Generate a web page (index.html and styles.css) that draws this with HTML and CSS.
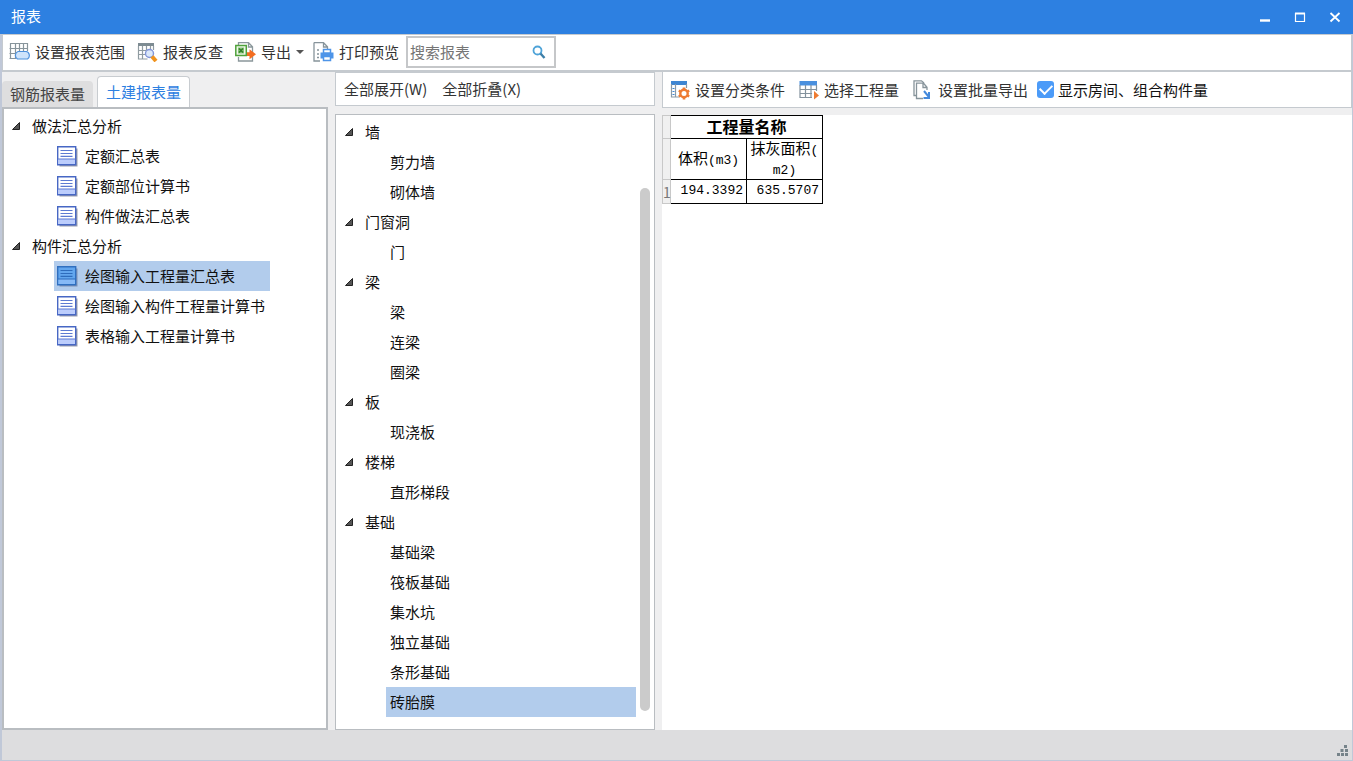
FILE: index.html
```html
<!DOCTYPE html>
<html lang="zh-CN">
<head>
<meta charset="utf-8">
<title>报表</title>
<link rel="stylesheet" href="styles.css">
</head>
<body>
<svg class="sprite" aria-hidden="true">
  <symbol id="doc" viewBox="0 0 21 21">
    <path d="M2.500 2.500h18v18h-18z" fill="#9a9eac"/>
    <path d="M.7 .7h18v18H.7z" fill="#fff" stroke="#4767c4" stroke-width="1.400"/>
    <path d="M1.400 13h16.600v5H1.400z" fill="#bccdfc"/>
    <path d="M1 13h17.500M3.500 4.500h12M3.500 7.500h12M3.500 10.300h12" stroke="#5c7ad2" stroke-width="1.200" fill="none"/>
  </symbol>
  <symbol id="doc-active" viewBox="0 0 21 21">
    <path d="M2.500 2.500h18v18h-18z" fill="#8093b5"/>
    <path d="M.7 .7h18v18H.7z" fill="#62a6ee" stroke="#2f6fc0" stroke-width="1.400"/>
    <path d="M1.400 13h16.600v5H1.400z" fill="#86b9f6"/>
    <path d="M1 13h17.500M3.500 4.500h12M3.500 7.500h12M3.500 10.300h12" stroke="#2d6cbc" stroke-width="1.200" fill="none"/>
  </symbol>
  <symbol id="arrow" viewBox="0 0 8 8"><path d="M7.500 .5v7h-7z" fill="#555" stroke="#222"/></symbol>
</svg>
<div class="window">
  <header class="titlebar">
    <h1 class="title">报表</h1>
    <div class="window-controls">
      <button class="control" aria-label="最小化"><svg width="12" height="12" viewBox="0 0 12 12"><path d="M1 9.500h10" stroke="#fff" stroke-width="2.400"/></svg></button>
      <button class="control" aria-label="最大化"><svg width="12" height="12" viewBox="0 0 12 12"><path d="M1.500 2v8.500h9V2" fill="none" stroke="#fff" stroke-width="1.200"/><path d="M1 2.500h10" stroke="#fff" stroke-width="2"/></svg></button>
      <button class="control" aria-label="关闭"><svg width="12" height="12" viewBox="0 0 12 12"><path d="M1.500 2l9 8.500M10.500 2l-9 8.500" stroke="#fff" stroke-width="1.800"/></svg></button>
    </div>
  </header>
  <div class="frame">
    <div class="toolbar main-toolbar">
      <button class="tool"><svg width="21" height="20" viewBox="0 0 21 20"><path d="M1 1.500h18M.5 6.500h18M.5 11.500h8M.5 16.500h6M1.500 1v16M6.500 1v16M10.500 1v8M14.500 1v8M18.500 1v8" stroke="#87949b" stroke-width="1.200" fill="none"/><path d="M9 9.500h8a3.500 4 0 0 1 1.500 7.500h-10A3.500 4 0 0 1 9 9.500z" fill="#cfe4fb" stroke="#4e91dc" stroke-width="1.200"/></svg>设置报表范围</button>
      <button class="tool"><svg width="21" height="20" viewBox="0 0 21 20"><path d="M1 1h16v3H1z" fill="#7d8b92"/><path d="M1.500 4v13h9M5.500 4v13M9.500 4v4M13.500 4v3M16.500 4v4M1 8.500h8M1 12.500h8" stroke="#8f9ba1" stroke-width="1.200" fill="none"/><circle cx="12.500" cy="11.500" r="4" fill="#dbe8fa" stroke="#8195d8" stroke-width="1.400"/><path d="M15 14.500l4 4.500" stroke="#f0931e" stroke-width="4"/></svg>报表反查</button>
      <button class="tool"><svg width="21" height="20" viewBox="0 0 21 20"><path d="M3.500 3V.7h10l4 4V19h-14v-4M13.500 1v4h4" fill="none" stroke="#8b979b" stroke-width="1.300"/><path d="M.8 3.500h10.500v10H.8z" fill="#eef6e9" stroke="#50a23c" stroke-width="1.500"/><path d="M3 5.500h6v6H3z" fill="#8bc57a"/><path d="M4 6.500l4 4M8 6.500l-4 4" stroke="#2f7e27" stroke-width="1.500"/><path d="M12 10.300H14.500V7.200l6.500 5-6.500 5v-3.200H12z" fill="#f36d21"/></svg>导出<i class="caret"></i></button>
      <button class="tool"><svg width="21" height="20" viewBox="0 0 21 20"><path d="M1 .7h9.500l4 4V7M10.500 1v4h4M1 .5V19h6" fill="none" stroke="#87949b" stroke-width="1.300"/><path d="M4 8h2M4 12h2M4 15.500h2" stroke="#87949b" stroke-width="1.500"/><path d="M7.500 10.500H20.500v6H7.500z" fill="#4d94e8"/><path d="M10.500 7.500h7V11h-7zM10.500 14.500h7v4h-7z" fill="#fff" stroke="#4d94e8" stroke-width="1.500"/></svg>打印预览</button>
      <div class="search">
        <input class="search-input" type="text" placeholder="搜索报表" aria-label="搜索报表">
        <svg width="14" height="14" viewBox="0 0 14 14"><circle cx="5.500" cy="5.500" r="4" fill="none" stroke="#4ea3d8" stroke-width="1.800"/><path d="M8.500 8.500l4 4.500" stroke="#3d7fa8" stroke-width="2.400"/></svg>
      </div>
    </div>
    <main class="panes">
      <section class="pane">
        <nav class="tabs">
          <button class="tab">钢筋报表量</button>
          <button class="tab tab-active">土建报表量</button>
        </nav>
        <div class="box report-tree">
          <ul class="tree">
            <li class="group"><svg class="arrow"><use href="#arrow"/></svg>做法汇总分析</li>
            <li class="report"><svg class="doc"><use href="#doc"/></svg>定额汇总表</li>
            <li class="report"><svg class="doc"><use href="#doc"/></svg>定额部位计算书</li>
            <li class="report"><svg class="doc"><use href="#doc"/></svg>构件做法汇总表</li>
            <li class="group"><svg class="arrow"><use href="#arrow"/></svg>构件汇总分析</li>
            <li class="report selected"><svg class="doc"><use href="#doc-active"/></svg>绘图输入工程量汇总表</li>
            <li class="report"><svg class="doc"><use href="#doc"/></svg>绘图输入构件工程量计算书</li>
            <li class="report"><svg class="doc"><use href="#doc"/></svg>表格输入工程量计算书</li>
          </ul>
        </div>
      </section>
      <section class="pane">
        <div class="toolbar fold-toolbar">
          <button class="tool">全部展开(W)</button>
          <button class="tool">全部折叠(X)</button>
        </div>
        <div class="box part-tree">
          <ul class="tree">
            <li class="group"><svg class="arrow"><use href="#arrow"/></svg>墙</li>
            <li class="part">剪力墙</li>
            <li class="part">砌体墙</li>
            <li class="group"><svg class="arrow"><use href="#arrow"/></svg>门窗洞</li>
            <li class="part">门</li>
            <li class="group"><svg class="arrow"><use href="#arrow"/></svg>梁</li>
            <li class="part">梁</li>
            <li class="part">连梁</li>
            <li class="part">圈梁</li>
            <li class="group"><svg class="arrow"><use href="#arrow"/></svg>板</li>
            <li class="part">现浇板</li>
            <li class="group"><svg class="arrow"><use href="#arrow"/></svg>楼梯</li>
            <li class="part">直形梯段</li>
            <li class="group"><svg class="arrow"><use href="#arrow"/></svg>基础</li>
            <li class="part">基础梁</li>
            <li class="part">筏板基础</li>
            <li class="part">集水坑</li>
            <li class="part">独立基础</li>
            <li class="part">条形基础</li>
            <li class="part selected">砖胎膜</li>
          </ul>
          <div class="scrollbar"><div class="thumb"></div></div>
        </div>
      </section>
      <section class="pane">
        <div class="toolbar report-toolbar">
          <button class="tool"><svg width="20" height="20" viewBox="0 0 20 20"><path d="M1 1h16v4H1z" fill="#3f86d2"/><path d="M1.500 4v13h8M5.500 4v13M16.500 4v4" stroke="#8a99a5" stroke-width="1.200" fill="none"/><path d="M2.500 8.500h2M2.500 11.500h2M2.500 14.500h2" stroke="#3f86d2" stroke-width="1.200"/><circle cx="14" cy="13.500" r="3.700" fill="#fff" stroke="#ee7b32" stroke-width="2.400"/><path d="M14 7.500v2M14 17.500v2M8.800 10.500l1.700 1M17.500 15.500l1.700 1M8.800 16.500l1.700-1M17.500 11.500l1.700-1" stroke="#ee7b32" stroke-width="2.600"/></svg>设置分类条件</button>
          <button class="tool"><svg width="20" height="20" viewBox="0 0 20 20"><path d="M.5 1h17.500v4.500H.5z" fill="#4a90de"/><path d="M1 5v12.500h12M6.500 5v12.500M12 5v12.500M17.500 5v6M1 9.500h16M1 13.500h12" stroke="#83929d" stroke-width="1.200" fill="none"/><path d="M15 11l5 4.500-5 4z" fill="#ee7b32"/></svg>选择工程量</button>
          <button class="tool"><svg width="20" height="20" viewBox="0 0 20 20"><path d="M3 15.500H1V.8h7.500L11 3" fill="none" stroke="#87949b" stroke-width="1.300"/><path d="M10 18.500H3.500V3.200h7l3.500 4V10M10 3.500v4h4" fill="none" stroke="#87949b" stroke-width="1.300"/><path d="M11 11l4.500 5.500M16 12v6h-5.500" fill="none" stroke="#4489dc" stroke-width="2"/></svg>设置批量导出</button>
          <label class="check"><input class="check-input" type="checkbox" checked>显示房间、组合构件量</label>
        </div>
        <div class="sheet">
          <table class="grid">
            <colgroup><col class="col-head"><col class="col-value"><col class="col-value"></colgroup>
            <tr><td class="row-head"></td><th class="grid-title" colspan="2">工程量名称</th></tr>
            <tr class="units"><td class="row-head"></td><td>体积<span class="mono">(m3)</span></td><td>抹灰面积<span class="mono">(<br>m2)</span></td></tr>
            <tr class="values"><td class="row-head">1</td><td>194.3392</td><td>635.5707</td></tr>
          </table>
        </div>
      </section>
    </main>
    <footer class="status">
      <svg width="13" height="12" viewBox="0 0 13 12"><path d="M8 0h3v3H8zM4.500 4h3v3h-3zM9 4h3v3H9zM1 8h3v3H1zM5 8h3v3H5zM9 8h3v3H9z" fill="#76838a"/></svg>
    </footer>
  </div>
</div>
</body>
</html>
```
FILE: styles.css
```css
* { box-sizing: border-box; }
body {
  margin: 0;
  color: #111;
  font: 15px/20px "Noto Sans CJK SC", sans-serif;
}
button {
  font: inherit;
  color: inherit;
  border: 0;
  background: none;
  padding: 0;
}
svg { flex: none; }
.sprite { position: absolute; width: 0; height: 0; }
.window { display: flex; flex-direction: column; height: 100vh; }
.titlebar {
  display: flex;
  align-items: center;
  justify-content: space-between;
  height: 34px;
  padding: 0 12px 2px 11px;
  background: #2d80e1;
  color: #fff;
}
.title { margin: 0; font-size: 15px; font-weight: 400; }
.window-controls { display: flex; gap: 23px; padding-top: 2px; }
.control { display: flex; }
.frame {
  flex: 1;
  min-height: 0;
  display: flex;
  flex-direction: column;
  border: solid #c0c8d8;
  border-width: 0 1px 1px 2px;
  background: #efeff0;
}
.toolbar {
  display: flex;
  align-items: center;
  background: #fff;
  border: 1px solid #c5cacf;
  color: #333;
}
.tool { display: flex; align-items: center; gap: 5px; white-space: nowrap; }
.main-toolbar {
  height: 38px;
  padding: 0 6px 1px;
  gap: 12px;
  border-bottom-width: 2px;
}
.caret {
  border: 4px solid transparent;
  border-top-color: #555;
  border-bottom: 0;
}
.main-toolbar .tool:nth-child(3) { margin-right: -3px; }
.search {
  display: flex;
  align-items: center;
  width: 150px;
  height: 32px;
  margin-left: -5px;
  padding: 0 8px 0 2px;
  border: 2px solid #c5c7c9;
}
.search-input {
  flex: 1;
  min-width: 0;
  padding: 0;
  border: 0;
  outline: 0;
  font: inherit;
}
.search-input::placeholder { color: #757575; }
.panes {
  flex: 1;
  min-height: 0;
  display: grid;
  grid-template-columns: 326px 320px 1fr;
  gap: 7px;
}
.pane { display: flex; flex-direction: column; min-width: 0; min-height: 0; }
.box { flex: 1; min-height: 0; background: #fff; border: 2px solid #b9bdc1; }
.tabs { display: flex; align-items: flex-end; gap: 4px; height: 35px; padding-top: 4px; }
.tab {
  height: 26px;
  padding: 0 8px;
  background: #dededf;
  color: #444;
  border-radius: 4px 4px 0 0;
}
.tab-active {
  height: 31px;
  background: #fff;
  color: #2d80e1;
  border: 1px solid #c8ccd0;
  border-bottom: 0;
}
.report-tree { padding: 2px 0 0; }
.tree { list-style: none; margin: 0; padding: 0; flex: 1; }
.tree li { display: flex; align-items: center; height: 30px; }
.arrow { width: 8px; height: 8px; }
.group { padding-left: 8px; gap: 12px; }
.report { width: 216px; margin-left: 50px; padding-left: 3px; gap: 7px; }
.doc { width: 21px; height: 21px; }
.selected { background: #b2ccec; }
.fold-toolbar { height: 34px; padding: 0 8px; gap: 15px; margin-bottom: 8px; }
.part-tree {
  display: flex;
  gap: 4px;
  padding: 2px 4px 0 0;
  border-width: 1px;
}
.part-tree .group { padding-left: 9px; }
.part { margin-left: 50px; padding-left: 4px; }
.scrollbar { display: flex; flex-direction: column; justify-content: flex-end; width: 10px; padding-bottom: 18px; }
.thumb { height: 88%; border-radius: 5px; background: #cbcbcb; }
.report-toolbar { height: 36px; padding: 0 7px; gap: 14px; margin-bottom: 7px; border-top: 0; }
.check { display: flex; align-items: center; gap: 4px; margin-left: -5px; color: #111; white-space: nowrap; }
.check-input {
  appearance: none;
  display: grid;
  place-items: center;
  width: 17px;
  height: 17px;
  margin: 0;
  border-radius: 3px;
  background: #4c9bf8;
}
.check-input:checked::before {
  content: "";
  width: 10px;
  height: 6px;
  margin-bottom: 3px;
  border: solid #fff;
  border-width: 0 0 2px 2px;
  transform: rotate(-45deg);
}
.sheet { flex: 1; background: #fff; }
.grid { border-collapse: collapse; table-layout: fixed; width: 161px; color: #000; }
.col-head { width: 8px; }
.col-value { width: 76px; }
.grid td, .grid th { padding: 0; border: 1px solid #000; text-align: center; }
.grid .grid-title { height: 23px; padding-bottom: 2px; font-size: 16px; line-height: 20px; }
.units { height: 41px; line-height: 17px; }
.mono { font: 13px/17px "Liberation Mono", monospace; }
.values { height: 24px; font: 13px/20px "Liberation Mono", monospace; }
.grid .values td { text-align: right; padding: 0 3px 2px 0; }
.grid .row-head { border-color: #c8c8c8; background: #f0f0f0; color: #777; }
.grid .values .row-head { padding: 0; font: 14px/20px "Noto Sans CJK SC", sans-serif; }
.status {
  display: flex;
  align-items: flex-end;
  justify-content: flex-end;
  height: 30px;
  padding: 3px;
  background: #dddddf;
}
```
